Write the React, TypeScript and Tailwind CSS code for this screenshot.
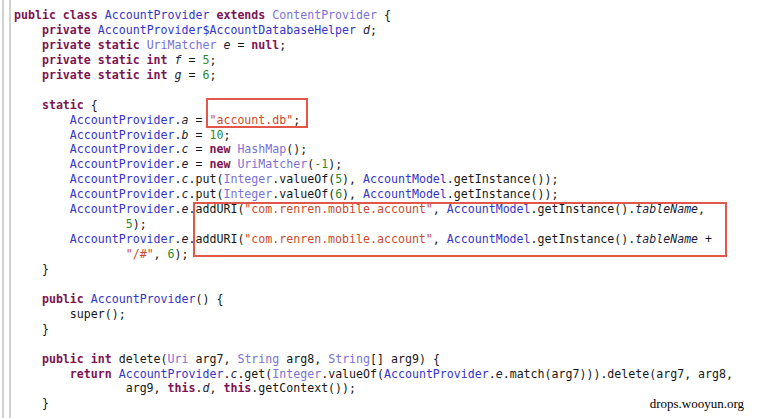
type Kind = "k" | "t" | "c" | "s" | "n" | "f" | "p";
type Tok = [Kind, string];

const tone: Record<Kind, string> = {
  k: "font-bold text-[#7d1452]",
  t: "text-[#3434c8]",
  c: "text-[#7a72d2]",
  s: "text-[#cc4b2c]",
  n: "text-[#2e8b2e]",
  f: "italic text-[#1c1c3a]",
  p: "text-[#161616]",
};

const p = (s: string): Tok => ["p", s];
const k = (s: string): Tok => ["k", s];
const t = (s: string): Tok => ["t", s];
const c = (s: string): Tok => ["c", s];
const s = (v: string): Tok => ["s", v];
const n = (v: string): Tok => ["n", v];
const f = (v: string): Tok => ["f", v];

const AP = t("AccountProvider");

const lines: Tok[][] = [
  [k("public class "), AP, p(" "), k("extends "), c("ContentProvider"), p(" {")],
  [p("    "), k("private "), t("AccountProvider$AccountDatabaseHelper"), p(" "), f("d"), p(";")],
  [p("    "), k("private static "), c("UriMatcher"), p(" "), f("e"), p(" = "), k("null"), p(";")],
  [p("    "), k("private static int "), f("f"), p(" = "), n("5"), p(";")],
  [p("    "), k("private static int "), f("g"), p(" = "), n("6"), p(";")],
  [],
  [p("    "), k("static"), p(" {")],
  [p("        "), AP, p("."), f("a"), p(" = "), s('"account.db"'), p(";")],
  [p("        "), AP, p("."), f("b"), p(" = "), n("10"), p(";")],
  [p("        "), AP, p("."), f("c"), p(" = "), k("new "), c("HashMap"), p("();")],
  [p("        "), AP, p("."), f("e"), p(" = "), k("new "), c("UriMatcher"), p("("), n("-1"), p(");")],
  [p("        "), AP, p("."), f("c"), p(".put("), c("Integer"), p(".valueOf("), n("5"), p("), "), t("AccountModel"), p(".getInstance());")],
  [p("        "), AP, p("."), f("c"), p(".put("), c("Integer"), p(".valueOf("), n("6"), p("), "), t("AccountModel"), p(".getInstance());")],
  [p("        "), AP, p("."), f("e"), p(".addURI("), s('"com.renren.mobile.account"'), p(", "), t("AccountModel"), p(".getInstance()."), f("tableName"), p(",")],
  [p("                "), n("5"), p(");")],
  [p("        "), AP, p("."), f("e"), p(".addURI("), s('"com.renren.mobile.account"'), p(", "), t("AccountModel"), p(".getInstance()."), f("tableName"), p(" +")],
  [p("                "), s('"/#"'), p(", "), n("6"), p(");")],
  [p("    }")],
  [],
  [p("    "), k("public "), AP, p("() {")],
  [p("        super();")],
  [p("    }")],
  [],
  [p("    "), k("public int "), p("delete("), c("Uri"), p(" arg7, "), c("String"), p(" arg8, "), c("String"), p("[] arg9) {")],
  [p("        "), k("return "), AP, p("."), f("c"), p(".get("), c("Integer"), p(".valueOf("), AP, p("."), f("e"), p(".match(arg7))).delete(arg7, arg8,")],
  [p("                arg9, "), k("this"), p("."), f("d"), p(", "), k("this"), p(".getContext());")],
  [p("    }")],
];

export default function App() {
  return (
    <div className="relative flex h-[418px] w-[758px] overflow-hidden bg-white">
      <div className="ml-[2px] h-full w-[9px] shrink-0 border-x-2 border-[#d2d2d2]" />

      <pre className="pl-[3px] pt-[8px] font-['DejaVu_Sans_Mono',monospace] text-[11.6px] leading-[14.95px]">
        {lines.map((line, i) => (
          <div key={i} className="h-[14.95px] whitespace-pre">
            {line.map(([kind, text], j) => (
              <span key={j} className={tone[kind]}>
                {text}
              </span>
            ))}
          </div>
        ))}
      </pre>

      {/* annotation boxes */}
      <div className="absolute left-[206px] top-[98px] h-[30px] w-[102px] border-2 border-[#e2574a]" />
      <div className="absolute left-[193px] top-[202px] h-[55px] w-[534px] border-2 border-[#e2574a]" />

      <div className="absolute bottom-[5px] right-[14px] font-['Liberation_Serif',serif] text-[13px] text-black">
        drops.wooyun.org
      </div>
    </div>
  );
}
